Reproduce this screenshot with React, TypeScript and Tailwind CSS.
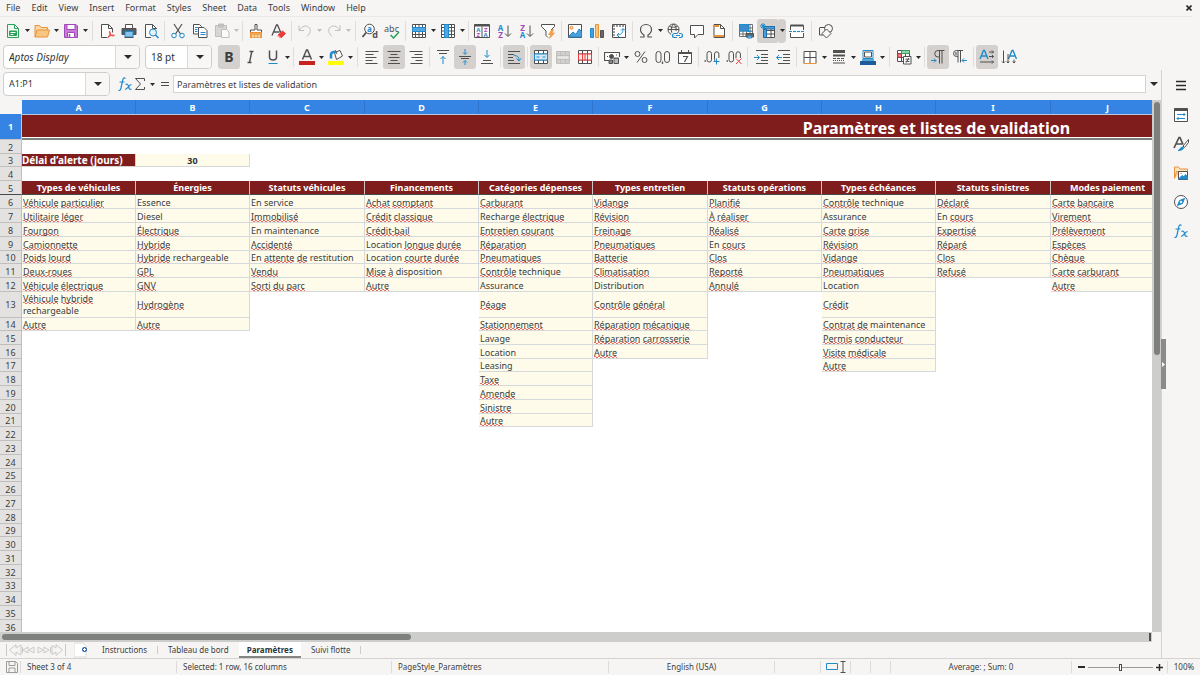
import React from "react";

const D = "#505050";
const B = "#1e8bcd";
const O = "#e8923a";
const R = "#ed3d3b";
const G = "#2aa05a";
const P = "#a347ba";
const L = "#c0bebc";

type Kids = { children?: React.ReactNode };

function Svg({ children, w = 16 }: Kids & { w?: number }) {
  return (
    <svg width={w} height="16" viewBox={`0 0 ${w} 16`} fill="none" stroke={D} strokeWidth="1" aria-hidden="true" className="block shrink-0">
      {children}
    </svg>
  );
}

function T({ x, y, s, c, b, i, children }: Kids & { x: number; y: number; s: number; c: string; b?: boolean; i?: boolean }) {
  return (
    <text x={x} y={y} fontSize={s} fill={c} stroke="none" textAnchor="middle" fontFamily="'Noto Sans', sans-serif" fontWeight={b ? 700 : 400} fontStyle={i ? "italic" : "normal"}>
      {children}
    </text>
  );
}

const icons: Record<string, React.ReactNode> = {
  newDoc: (
    <Svg>
      <path d="M2.5 1.5h7l4 4v9h-11z" fill="#eef8f1" stroke={G} />
      <path d="M9.5 1.5v4h4" stroke={G} />
      <path d="M4.5 8h7v4.500h-7zM4.500 10.200h7M8 8v4.500" fill={G} stroke={G} />
      <path d="M5.500 9.500h5M5.500 11.500h3" stroke="#fff" />
    </Svg>
  ),
  open: (
    <Svg>
      <path d="M1 14V2.500h4.500l1.500 2h6.500v3" fill="#fbd9a5" stroke={O} />
      <path d="M1 14l2-7h12.500l-2 7z" fill="#f9c680" stroke={O} />
    </Svg>
  ),
  save: (
    <Svg>
      <path d="M1.500 1.500h11.500l1.500 1.500v11.500h-13z" fill="#c77bd3" stroke={P} />
      <path d="M4 1.500h8v5H4z" fill="#fff" stroke={P} />
      <path d="M4.500 9.500h7v5h-7z" fill="#fff" stroke={P} />
      <path d="M6.500 11v3.500" stroke={P} strokeWidth="1.500" />
    </Svg>
  ),
  pdf: (
    <Svg>
      <path d="M8 14.500H2.500v-13h7l4 4v4" fill="#fdfdfd" />
      <path d="M9.500 1.500v4h4" />
      <path d="M8.500 15c2-2 3.500-5 2.500-6.500-1-.8-1.200 1.500 1 3.500 1.500 1.300 3.500 1.200 3.300.3-.3-.9-4 .1-6.300 1.700" stroke={R} />
    </Svg>
  ),
  print: (
    <Svg>
      <path d="M4.500 5V1.500h7V5" fill="#fff" />
      <path d="M1 5.500h14v6H1z" fill="#4f5d68" />
      <path d="M4 8.500h8v5.500H4z" fill="#8cc3ea" stroke={B} />
      <path d="M3.500 14.500h9" stroke={D} />
    </Svg>
  ),
  preview: (
    <Svg>
      <path d="M13.500 6V5.500l-4-4h-7v13H8" fill="#fdfdfd" />
      <path d="M9.500 1.500v4h4" />
      <circle cx="10" cy="9.500" r="3.500" fill="#e3f1fb" stroke={B} />
      <path d="M12.500 12l3 3" stroke={B} strokeWidth="1.500" />
    </Svg>
  ),
  cut: (
    <Svg>
      <path d="M4 1l6.500 10M12 1L5.500 11" strokeWidth="1.200" />
      <circle cx="4" cy="12.500" r="2.300" stroke={B} />
      <circle cx="12" cy="12.500" r="2.300" stroke={B} />
    </Svg>
  ),
  copy: (
    <Svg>
      <path d="M1.500 1.500h6l2 2v7.500h-8z" fill="#fff" />
      <path d="M6.500 4.500h5.500l3 3v7h-8.500z" fill="#fff" />
      <path d="M3 4.500h3M3 6.500h2.500M3 8.500h2.500" stroke={B} />
      <path d="M8.500 9.500h5M8.500 11.500h5" stroke={B} />
    </Svg>
  ),
  paste: (
    <Svg>
      <path d="M1.500 2.500h11v11h-11z" fill="#d8d6d4" stroke={L} />
      <path d="M4.500 1h5v3h-5z" fill="#c4c2c0" stroke={L} />
      <path d="M7.500 6.500h5l2.500 2.500v5.500H7.500z" fill="#fafafa" stroke={L} />
    </Svg>
  ),
  clone: (
    <Svg>
      <path d="M7 1.500h2v5.500h4.500v2.500h-11V7H7z" fill="#fff" />
      <path d="M2.500 9.500h11v5h-11z" fill="#f5a54c" stroke={O} />
      <path d="M5 12v2.500M8 12v2.500M11 12v2.500" stroke="#fff" />
    </Svg>
  ),
  clear: (
    <Svg>
      <path d="M2 12.500L6.500 2h1l3.500 8M3.500 9h6" strokeWidth="1.300" />
      <path d="M8 12l4.500-4 3 2.500-4.500 4.500z" fill={R} stroke={R} />
      <path d="M7.500 12.500l3 2.500" stroke="#f7a6a4" strokeWidth="1.500" />
    </Svg>
  ),
  undo: (
    <Svg>
      <path d="M2 2.500v5h5" stroke={L} />
      <path d="M2.500 7C5 3 9 2 11.500 4c3 2.500 2 6-1.500 9.500" stroke={L} />
    </Svg>
  ),
  redo: (
    <Svg>
      <path d="M14 2.500v5H9" stroke={L} />
      <path d="M13.500 7C11 3 7 2 4.500 4c-3 2.500-2 6 1.500 9.500" stroke={L} />
    </Svg>
  ),
  find: (
    <Svg w={18}>
      <circle cx="8.500" cy="6" r="4.800" fill="#fafafa" />
      <path d="M5.200 9.500L1.500 14" strokeWidth="1.800" />
      <T x={8.500} y={8.500} s={8} c={B} b>a</T>
      <T x={14} y={15} s={9} c={D} b>d</T>
    </Svg>
  ),
  spell: (
    <Svg w={20}>
      <T x={9.500} y={8.500} s={9} c={D}>abc</T>
      <path d="M8.500 12l3 3 5.500-6" stroke={G} strokeWidth="1.500" />
    </Svg>
  ),
  row: (
    <Svg>
      <path d="M1.500 1.500h13v13h-13z" fill="#fff" />
      <path d="M4.500 1.500v13M8 1.500v13M11.500 1.500v13M1.500 11.500h13" />
      <path d="M1.500 4.500h13v4h-13z" fill="#53a7e0" stroke={B} />
    </Svg>
  ),
  col: (
    <Svg>
      <path d="M1.500 1.500h13v13h-13z" fill="#fff" />
      <path d="M1.500 4.500h13M1.500 8h13M1.500 11.500h13M11.500 1.500v13" />
      <path d="M4.500 1.500h4v13h-4z" fill="#53a7e0" stroke={B} />
    </Svg>
  ),
  sort: (
    <Svg>
      <path d="M.5 1.500h15v13H.5zM8 3.500v11" fill="#fff" />
      <path d="M.5 2.500h15" strokeWidth="2" />
      <T x={4.300} y={9} s={6} c={B} b>A</T>
      <T x={4.300} y={14} s={6} c={P} b>Z</T>
      <T x={11.700} y={9} s={6} c={P} b>Z</T>
      <T x={11.700} y={14} s={6} c={B} b>A</T>
    </Svg>
  ),
  sortAZ: (
    <Svg>
      <T x={4.500} y={7.500} s={8} c={B} b>A</T>
      <T x={4.500} y={15} s={8} c={P} b>Z</T>
      <path d="M12 2.500V13M9 10.500l3 3 3-3" />
    </Svg>
  ),
  sortZA: (
    <Svg>
      <T x={4.500} y={7.500} s={8} c={P} b>Z</T>
      <T x={4.500} y={15} s={8} c={B} b>A</T>
      <path d="M12 2.500V13M9 10.500l3 3 3-3" />
    </Svg>
  ),
  filter: (
    <Svg>
      <path d="M8 14.500l-2-2V8L1.500 3.500v-2h13v2L11 7" fill="#fff" />
      <path d="M12 6.500L8.500 11.500H11L9.500 15.500 14.500 10H12l1.500-3.500z" fill="#f5a54c" stroke={O} strokeWidth=".7" />
    </Svg>
  ),
  image: (
    <Svg>
      <path d="M1.500 1.500h13v13h-13z" fill="#fff" />
      <path d="M2 13l4-4 3 2.500L12 6l2.500 2.500v5.500H2z" fill="#4b9fda" stroke={B} />
      <circle cx="4.500" cy="4.800" r="1.500" fill="#fcd49a" stroke={O} />
    </Svg>
  ),
  chart: (
    <Svg>
      <path d="M1.500 5.500h3v9h-3z" fill="#4b9fda" stroke={B} />
      <path d="M6.500 1.500h3v13h-3z" fill="#f9c680" stroke={O} />
      <path d="M11.500 7.500h3v7h-3z" fill="#6a6a6a" />
    </Svg>
  ),
  pivot: (
    <Svg>
      <path d="M1.500 1.500h13v13h-13z" fill="#fff" />
      <path d="M2 3h12M3 5v9" stroke="#9b9b9b" strokeWidth="2" strokeDasharray="2 1" />
      <path d="M6 12c4 0 6-2 6-6M10 7.500L12 5.500l2 2M8 10l-2 2 2 2" stroke={B} />
    </Svg>
  ),
  omega: (
    <Svg>
      <path d="M2 14h4v-2C3.500 10.500 2.500 8.500 2.500 6.500 2.500 3.500 5 1.500 8 1.500s5.500 2 5.500 5c0 2-1 4-3.500 5.500v2h4" strokeWidth="1.200" />
    </Svg>
  ),
  link: (
    <Svg>
      <circle cx="6.500" cy="6.500" r="5.500" />
      <path d="M1 6.500h11M6.500 1c-3 3-3 8 0 11M6.500 1c2.500 2 3 5 2.500 7M2.500 3.500c2.500 1 5.500 1 8 0" />
      <path d="M10 10.500H7.500a2 2 0 000 4H10M12 10.500h1.500a2 2 0 010 4H12M9 12.500h4" stroke="#f6f5f4" strokeWidth="3" />
      <path d="M10 10.500H7.500a2 2 0 000 4H10M12 10.500h1.500a2 2 0 010 4H12M9 12.500h4" stroke={B} strokeWidth="1.200" />
    </Svg>
  ),
  comment: (
    <Svg>
      <path d="M1.500 2.500h13v9H9l-3.500 3.500v-3.500h-4z" fill="#fff" />
    </Svg>
  ),
  header: (
    <Svg>
      <path d="M3 1.500h6.500l4 4v9H3z" fill="#fff" />
      <path d="M9.500 1.500v4h4" />
      <path d="M3 3h5M3 13h10" stroke={O} strokeWidth="2" />
    </Svg>
  ),
  printArea: (
    <Svg>
      <path d="M1.500 1.500h13v12h-13zM1.500 5h13M1.500 8h13M1.500 11h13M5 1.500v12M8.500 1.500v12M12 1.500v12" fill="#fff" strokeWidth=".8" />
      <path d="M1.500 1.500h9V8h-9z" fill="#3a8dcb" stroke={B} />
      <path d="M8 10.500h7.500v3.500H8z" fill="#5b6a75" />
      <path d="M9.500 8.500h4M9.500 13h4v2h-4z" fill="#8cc3ea" stroke={B} />
    </Svg>
  ),
  freeze: (
    <Svg>
      <path d="M3.500 3.500h11v11h-11zM3.500 7.500h11M3.500 11h11M11 3.500v11" fill="#fff" />
      <path d="M3.500 3.500h11V6h-11zM3.500 6H6.500v8.500H3.500z" fill="#4b9fda" stroke="#1f6ca8" />
      <path d="M3 0v6M0 3h6M1 1l4 4M5 1L1 5" stroke={B} />
    </Svg>
  ),
  split: (
    <Svg>
      <path d="M1.500 7V2.500h13V7M1.500 10v4.500h13V10" fill="#fff" />
      <path d="M1.500 2.500h13" strokeWidth="2" />
      <path d="M0 8.500h16" stroke={B} strokeDasharray="3 1" />
    </Svg>
  ),
  shapes: (
    <Svg>
      <circle cx="10.500" cy="5.500" r="4" />
      <path d="M2 4.500h5M1.500 4.500v7.500h4" />
      <path d="M8.500 6l4.500 4.500L8.500 15 4 10.500z" fill="#fafafa" />
    </Svg>
  ),
  left: (
    <Svg>
      <path d="M1.500 2.500h13M1.500 5.500h8M1.500 8.500h11M1.500 11.500h7M1.500 14.500h12" />
    </Svg>
  ),
  center: (
    <Svg>
      <path d="M1.500 2.500h13M4.500 5.500h7M2.500 8.500h11M4.500 11.500h7M2 14.500h12" />
    </Svg>
  ),
  right: (
    <Svg>
      <path d="M1.500 2.500h13M6.500 5.500h8M3.500 8.500h11M7.500 11.500h7M2.500 14.500h12" />
    </Svg>
  ),
  vTop: (
    <Svg>
      <path d="M2 1.500h12M4 4.500h8" />
      <path d="M8 15V7.500M5.500 10L8 7.500l2.500 2.500" stroke={B} />
    </Svg>
  ),
  vMid: (
    <Svg>
      <path d="M2 7.500h12M4 9.500h8" />
      <path d="M8 0v5M6 3.500l2 2 2-2M8 16v-4M6 13.500l2-2 2 2" stroke={B} />
    </Svg>
  ),
  vBot: (
    <Svg>
      <path d="M2 14.500h12M4 11.500h8" />
      <path d="M8 1v7M5.500 6L8 8.500 10.500 6" stroke={B} />
    </Svg>
  ),
  wrap: (
    <Svg>
      <path d="M2 2.500h12M2 5.500h6M2 8.500h5M2 11.500h6M2 14.500h12" />
      <path d="M8 6.500c3.500 0 5 1.500 5 5M10.500 9.500l2.500 2.500 2-2.500" stroke={B} />
    </Svg>
  ),
  merge: (
    <Svg>
      <path d="M1.500 1.500h13v13h-13zM1.500 5h13M1.500 11h13M5.500 1.500V5M10.500 1.500V5M5.500 11v3.500M10.500 11v3.500" fill="#fff" />
      <path d="M1.500 5h13v6h-13z" fill="#d3e9f8" stroke={B} />
      <path d="M3.500 8h3M12.500 8h-3" stroke={B} />
    </Svg>
  ),
  mergeOff: (
    <Svg>
      <path d="M1.500 2.500h13v12h-13zM1.500 6.500h13M1.500 10.500h13M5.500 2.500v12M10.500 2.500v12" fill="#d2d0ce" stroke={L} />
      <path d="M2.500 8.500h11" stroke="#e9e8e7" strokeWidth="2.500" />
    </Svg>
  ),
  unmerge: (
    <Svg>
      <path d="M1.500 1.500h13v13h-13zM1.500 5h13M1.500 11h13M5.500 1.500V5M10.500 1.500V5M5.500 11v3.500M10.500 11v3.500" fill="#fff" />
      <path d="M1.500 5h13v6h-13zM5.500 5v6M10.500 5v6M8 5v6" fill="#fdeaea" stroke={R} />
    </Svg>
  ),
  currency: (
    <Svg>
      <path d="M7 11.500H.5v-8h15V8" fill="#fff" strokeWidth="1.200" />
      <circle cx="7.500" cy="7.500" r="2" fill={D} />
      <path d="M3 7.500h1M12 6h1" />
      <path d="M5 11h3.500v3.500H5zM10 9h4.500v5.500H10z" fill="#8a8a8a" />
      <path d="M10.500 11h3.500M10.500 13h3.500" stroke="#e8e8e8" />
    </Svg>
  ),
  percent: (
    <Svg>
      <circle cx="4.500" cy="5" r="2.500" />
      <circle cx="11.500" cy="11" r="2.500" />
      <path d="M12 2.500l-8 11" />
    </Svg>
  ),
  number: (
    <Svg>
      <rect x="1" y="2.500" width="5" height="11" rx="2.500" />
      <rect x="9.500" y="2.500" width="5" height="11" rx="2.500" />
      <path d="M7.500 12.500v2.500" strokeWidth="1.300" />
    </Svg>
  ),
  date: (
    <Svg>
      <path d="M1.500 3.500h13v11h-13z" fill="#fff" />
      <path d="M1.500 4h13" strokeWidth="2" />
      <path d="M4.500 1v3M11.500 1v3" />
      <path d="M6 7.500h4.500L7.500 13" strokeWidth="1.200" />
    </Svg>
  ),
  addDec: (
    <Svg>
      <path d="M.5 12h1.500" strokeWidth="1.600" />
      <rect x="3" y="2.500" width="4.500" height="10.500" rx="2.200" />
      <path d="M10.500 9.500V5a2.200 2.200 0 014.400 0v4M10.500 9c0 2 .3 3 .8 3.500" />
      <path d="M12.500 9.500v6M9.500 12.500h6" stroke={B} />
    </Svg>
  ),
  delDec: (
    <Svg>
      <path d="M.5 12h1.500" strokeWidth="1.600" />
      <rect x="3" y="2.500" width="4.500" height="10.500" rx="2.200" />
      <path d="M10 9V5a2.200 2.200 0 014.400 0v4" />
      <path d="M10 9.500l5.500 5.500M15.500 9.500L10 15" stroke={R} />
    </Svg>
  ),
  indent: (
    <Svg>
      <path d="M3 1.500h12M8 5.500h7M8 8.500h7M8 11.500h7M3 14.500h12" />
      <path d="M1 8.500h5.500M4 6l2.500 2.500L4 11" stroke={B} />
    </Svg>
  ),
  outdent: (
    <Svg>
      <path d="M3 1.500h12M8 5.500h7M8 8.500h7M8 11.500h7M3 14.500h12" />
      <path d="M7 8.500H1.500M4 6L1.500 8.500 4 11" stroke={B} />
    </Svg>
  ),
  borders: (
    <Svg>
      <path d="M2 14V2.500h12V14M8 2.500V14M2 8.500h12" fill="#fff" />
      <path d="M1.500 14.500h13" stroke={O} />
    </Svg>
  ),
  lineStyle: (
    <Svg>
      <path d="M2 2.500h12" strokeWidth="3" />
      <path d="M2 6.500h12" strokeWidth="2" />
      <path d="M2 9.500h12" strokeDasharray="3 1" />
      <path d="M2 11.500h12" strokeDasharray="1 1" />
      <path d="M2 14h12" />
    </Svg>
  ),
  lineColor: (
    <Svg>
      <path d="M3 1.500h10v8H3z" fill="#fff" stroke={B} />
      <path d="M4.500 3h7v5h-7z" />
      <path d="M0 14h16" stroke="#1c5c9a" strokeWidth="4" />
      <path d="M2 11h12" stroke={B} strokeWidth="1.500" />
    </Svg>
  ),
  cond: (
    <Svg>
      <path d="M1.500 1.500h12v11h-12zM1.500 4.500h12M1.500 8.500h12M5.500 1.500v11M9.500 1.500v11" fill="#fff" />
      <path d="M5.500 1.500h8v3h-8z" fill="#8fd3a8" stroke={G} strokeWidth=".8" />
      <path d="M2 5h3v3H2z" fill="#f59a98" stroke={R} strokeWidth=".8" />
      <path d="M7.500 7.500h7.500v7.500H7.500z" fill="#fff" />
      <path d="M9.500 10.200h4M9.500 12.400h4M12.800 9l-2.600 4.600" />
    </Svg>
  ),
  ltr: (
    <Svg>
      <path d="M9.500 1.500v13M12 1.500v13M14.500 1.500H8a3.200 3.200 0 000 6.500h1.500" />
      <path d="M1 11.500h5M4 9.500l2 2-2 2" stroke={B} />
    </Svg>
  ),
  rtl: (
    <Svg>
      <path d="M6 1.500v12M8.500 1.500v12M11 1.500H4.500a3 3 0 000 6H6" />
      <path d="M4 3v3.500" stroke="#9a9a9a" strokeWidth="2.500" />
      <path d="M15 11.500h-5M12 9.500l-2 2 2 2" stroke={B} />
    </Svg>
  ),
  textH: (
    <Svg>
      <path d="M1 10L4.500 1.500h1L9 10M2.500 7h5" stroke={B} strokeWidth="1.400" />
      <path d="M10 3h4.500M10 7.500h4.500M1 13h13.500M13 1.500L14.500 3 13 4.500M13 6l1.500 1.500L13 9M13 11.500l1.500 1.500-1.500 1.500" />
    </Svg>
  ),
  textV: (
    <Svg>
      <path d="M7.500 10L11 1.500h1L15.500 10M9 7h5" stroke={B} strokeWidth="1.400" />
      <path d="M2.500 1.500V14M7 5v9M13 10.500V14M1 12.500L2.500 14 4 12.500M5.500 12.500L7 14l1.500-1.500M11.500 12.500L13 14l1.500-1.500" />
    </Svg>
  ),
  fontColor: (
    <Svg>
      <path d="M3.500 10.500L7.500 1h1l4 9.500M5 7.500h6" strokeWidth="1.500" />
      <path d="M0 14h16" stroke="#c9211e" strokeWidth="4" />
    </Svg>
  ),
  highlight: (
    <Svg>
      <path d="M6.500 3.500L12 1.500l2.500 5.500-6 3.500z" fill="#fff" />
      <path d="M9 5L7 1" />
      <path d="M3 9.500V5.500c0-2 2-3 4.500-2" stroke={B} strokeWidth="2.500" />
      <path d="M0 14h16" stroke="#ffff00" strokeWidth="4" />
    </Svg>
  ),
  bold: <span className="text-[14px] leading-4 font-bold text-[#3c3c3c]">B</span>,
  italic: (
    <Svg>
      <path d="M6.500 2.500h4M4.500 13.500h4M8.800 2.500l-2.300 11" strokeWidth="1.400" />
    </Svg>
  ),
  underline: (
    <Svg>
      <path d="M4.500 1.500V8c0 4 7 4 7 0V1.500" strokeWidth="1.500" />
      <path d="M3.500 14.500h9" stroke={B} />
    </Svg>
  ),
};

type Item = { t: "b" | "a" | "s" | "w"; n?: string; label?: string; on?: boolean; dim?: boolean };
const b = (n: string, label: string, on = false): Item => ({ t: "b", n, label, on });
const a = (label: string, dim = false, on = false): Item => ({ t: "a", label, dim, on });
const s: Item = { t: "s" };
const w: Item = { t: "w" };

const standardBar: Item[] = [
  b("newDoc", "New"), a("New options"), b("open", "Open"), a("Open options"), b("save", "Save"), a("Save options"), w,
  b("pdf", "Export as PDF"), b("print", "Print"), b("preview", "Print preview"), s,
  b("cut", "Cut"), b("copy", "Copy"), b("paste", "Paste"), a("Paste options", true), s,
  b("clone", "Clone formatting"), b("clear", "Clear formatting"), s,
  b("undo", "Undo"), a("Undo list", true), b("redo", "Redo"), a("Redo list", true), w,
  b("find", "Find and replace"), b("spell", "Spelling"), s,
  b("row", "Row"), a("Row options"), b("col", "Column"), a("Column options"), s,
  b("sort", "Sort"), b("sortAZ", "Sort ascending"), b("sortZA", "Sort descending"), b("filter", "AutoFilter"), s,
  b("image", "Image"), b("chart", "Chart"), b("pivot", "Pivot table"), s,
  b("omega", "Special character"), a("Special characters"), b("link", "Hyperlink"), b("comment", "Comment"), b("header", "Headers and footers"), s,
  b("printArea", "Print area"), b("freeze", "Freeze rows and columns", true), a("Freeze options", false, true), b("split", "Split window"), w,
  b("shapes", "Draw functions"),
];

const formatBar: Item[] = [
  b("bold", "Bold", true), b("italic", "Italic"), b("underline", "Underline"), a("Underline options"), s,
  b("fontColor", "Font color"), a("Font color options"), b("highlight", "Background color"), a("Background color options"), w,
  b("left", "Align left"), b("center", "Align center", true), b("right", "Align right"), s,
  b("vTop", "Align top"), b("vMid", "Center vertically", true), b("vBot", "Align bottom"), s,
  b("wrap", "Wrap text", true), s,
  b("merge", "Merge and center", true), b("mergeOff", "Merge cells"), b("unmerge", "Unmerge cells"), s,
  b("currency", "Currency"), a("Currency options"), b("percent", "Percent"), b("number", "Number"), b("date", "Date"), s,
  b("addDec", "Add decimal place"), b("delDec", "Delete decimal place"), s,
  b("indent", "Increase indent"), b("outdent", "Decrease indent"), s,
  b("borders", "Borders"), a("Border options"), b("lineStyle", "Border style"), a("Border style options"), b("lineColor", "Border color"), a("Border color options"), w,
  b("cond", "Conditional formatting"), a("Conditional options"), s,
  b("ltr", "Left-to-right", true), b("rtl", "Right-to-left"), s,
  b("textH", "Text left to right", true), b("textV", "Text top to bottom"),
];

function Caret({ dim = false, big = false }: { dim?: boolean; big?: boolean }) {
  return (
    <svg width={big ? 8 : 5} height={big ? 4 : 3} viewBox="0 0 10 6" preserveAspectRatio="none" aria-hidden="true" className="block shrink-0">
      <path d="M0 0h10L5 6z" fill={dim ? L : "#2a2a2a"} />
    </svg>
  );
}

function Bar({ items }: { items: Item[] }) {
  return (
    <>
      {items.map((it, i) => {
        if (it.t === "s" || it.t === "w")
          return (
            <span key={i} className={it.t === "s" ? "flex w-[5px] shrink-0 justify-center" : "flex w-[7px] shrink-0 justify-center"}>
              <span className="h-5 w-px bg-[#e0dedc]" />
            </span>
          );
        if (it.t === "a")
          return (
            <button key={i} aria-label={it.label} className={it.on ? "flex h-6 w-[7px] shrink-0 items-center justify-center rounded-r bg-[#d3d0cd]" : "flex h-6 w-[7px] shrink-0 items-center justify-center"}>
              <Caret dim={it.dim} />
            </button>
          );
        return (
          <button key={i} aria-label={it.label} className={it.on ? "flex h-6 w-[22px] shrink-0 items-center justify-center rounded-[3px] bg-[#d3d0cd]" : "flex h-6 w-[22px] shrink-0 items-center justify-center"}>
            {icons[it.n as string]}
          </button>
        );
      })}
    </>
  );
}

function Combo({ label, value, width, italic = false, small = false }: { label: string; value: string; width: string; italic?: boolean; small?: boolean }) {
  return (
    <div className={`flex h-6 shrink-0 overflow-hidden rounded border border-[#d0cdca] bg-white ${width}`}>
      <input aria-label={label} defaultValue={value} className={`min-w-0 flex-1 bg-transparent pl-[5px] text-[#2e3436] outline-none ${small ? "text-[9px]" : "text-[10px]"} ${italic ? "italic" : ""}`} />
      <button aria-label={`${label} list`} className="flex w-6 shrink-0 items-center justify-center border-l border-[#dcdad7] bg-[#f8f7f6]">
        <Caret big />
      </button>
    </div>
  );
}

const heads = ["Types de véhicules", "Énergies", "Statuts véhicules", "Financements", "Catégories dépenses", "Types entretien", "Statuts opérations", "Types échéances", "Statuts sinistres", "Modes paiement"];

// An asterisk marks a word the spell checker underlines.
const lists: string[][] = [
  ["*Véhicule *particulier", "*Utilitaire *léger", "*Fourgon", "*Camionnette", "*Poids *lourd", "*Deux-roues", "*Véhicule *électrique", "*Véhicule *hybride rechargeable", "*Autre"],
  ["Essence", "Diesel", "*Électrique", "*Hybride", "*Hybride rechargeable", "*GPL", "*GNV", "*Hydrogène", "*Autre"],
  ["En service", "*Immobilisé", "En maintenance", "*Accidenté", "En *attente *de restitution", "*Vendu", "*Sorti *du *parc"],
  ["*Achat *comptant", "*Crédit *classique", "*Crédit-bail", "Location *longue *durée", "Location *courte *durée", "*Mise *à disposition", "*Autre"],
  ["*Carburant", "Recharge *électrique", "*Entretien *courant", "*Réparation", "*Pneumatiques", "*Contrôle technique", "Assurance", "*Péage", "*Stationnement", "Lavage", "Location", "Leasing", "*Taxe", "*Amende", "*Sinistre", "*Autre"],
  ["*Vidange", "*Révision", "*Freinage", "*Pneumatiques", "*Batterie", "*Climatisation", "Distribution", "*Contrôle *général", "*Réparation *mécanique", "*Réparation *carrosserie", "*Autre"],
  ["*Planifié", "*À *réaliser", "*Réalisé", "En *cours", "*Clos", "*Reporté", "*Annulé"],
  ["*Contrôle technique", "Assurance", "*Carte *grise", "*Révision", "*Vidange", "*Pneumatiques", "Location", "*Crédit", "*Contrat *de maintenance", "*Permis *conducteur", "*Visite *médicale", "*Autre"],
  ["*Déclaré", "En *cours", "*Expertisé", "*Réparé", "*Clos", "*Refusé"],
  ["*Carte *bancaire", "*Virement", "*Prélèvement", "*Espèces", "*Chèque", "*Carte *carburant", "*Autre"],
];

const letters = "ABCDEFGHIJKLMNOP".split("");

function rowHeight(n: number) {
  if (n === 1) return "h-[26px]";
  if (n === 13) return "h-[26px] leading-3";
  if (n === 3 || n === 10 || n === 14) return "h-[13px]";
  if (n > 14 && n % 4 === 1) return "h-[13px]";
  return "h-[14px]";
}

function Words({ text }: { text: string }) {
  return (
    <>
      {text.split(" ").map((word, i) => (
        <React.Fragment key={i}>
          {i > 0 && " "}
          {word.startsWith("*") ? (
            <span className="bg-[linear-gradient(90deg,#ea6a66_50%,transparent_50%),linear-gradient(90deg,transparent_50%,#ea6a66_50%)] bg-[length:4px_1px] bg-[position:0_10px,0_11px] bg-repeat-x">{word.slice(1)}</span>
          ) : (
            word
          )}
        </React.Fragment>
      ))}
    </>
  );
}

function RowCells({ n }: { n: number }) {
  if (n === 1)
    return (
      <td colSpan={16} className="border-t border-b-2 border-t-[#b9c9dc] border-b-[#7b807b] p-0">
        <div className="h-[23px] border-b border-white bg-[#7f1d1d] text-center text-[16px] leading-[26px] font-bold text-white">Paramètres et listes de validation</div>
      </td>
    );
  if (n === 3)
    return (
      <>
        <td className="border-r border-b border-[#d5d3d0] bg-[#7f1d1d] p-0 text-[10px] font-bold text-white">Délai d’alerte (jours)</td>
        <td className="border border-t-0 border-l-0 border-[#d6d9dc] bg-[#fffbeb] p-0 pt-px text-center font-bold text-[#2e3436]">30</td>
        <td colSpan={14} className="p-0" />
      </>
    );
  if (n === 5)
    return (
      <>
        {letters.map((l, i) => (
          <td key={l} className="border-r border-b border-r-[#cfc4c2] border-b-[#454a4c] bg-[#7f1d1d] p-0 text-center font-bold text-white">
            {heads[i]}
          </td>
        ))}
      </>
    );
  if (n < 6) return <td colSpan={16} className="p-0" />;
  return (
    <>
      {letters.map((l, i) => {
        const text = lists[i]?.[n - 6];
        return text ? (
          <td key={l} className="overflow-hidden border-r border-b border-[#d6d9dc] bg-[#fffbeb] p-0 pt-px pl-px text-[#383d40]">
            <Words text={text} />
          </td>
        ) : (
          <td key={l} className="p-0" />
        );
      })}
    </>
  );
}

function rowHead(n: number) {
  if (n === 1) return "border-r border-b border-[#c9c8c6] bg-[#3584e4] p-0 font-bold text-white";
  if (n === 5) return "border-r border-b border-r-[#c0bfbd] border-b-[#454a4c] bg-[#e3e2e1] p-0 pt-px font-normal text-[#3d3d3d]";
  return "border-r border-b border-[#c0bfbd] bg-[#e3e2e1] p-0 pt-px font-normal text-[#3d3d3d]";
}

function Sheet() {
  const rows = Array.from({ length: 36 }, (_, i) => i + 1);
  return (
    <table className="w-[1851px] table-fixed border-separate border-spacing-0 text-[9px] leading-[11px]">
      <colgroup>
        <col className="w-[22px]" />
        {letters.map((l, i) => (
          <col key={l} className={i % 3 === 2 ? "w-[115px]" : "w-[114px]"} />
        ))}
      </colgroup>
      <thead>
        <tr className="h-[14px]">
          <th className="bg-[#f6f5f4] p-0" />
          {letters.map((l) => (
            <th key={l} scope="col" className="border-r border-[#2f74cc] bg-[#3584e4] p-0 font-bold text-white">
              {l}
            </th>
          ))}
        </tr>
      </thead>
      <tbody>
        {rows.map((n) => (
          <tr key={n} className={rowHeight(n)}>
            <th scope="row" className={rowHead(n)}>
              {n}
            </th>
            <RowCells n={n} />
          </tr>
        ))}
      </tbody>
    </table>
  );
}

function Side({ label, children }: Kids & { label: string }) {
  return (
    <button aria-label={label} className="flex h-[29px] w-full items-center justify-center">
      {children}
    </button>
  );
}

function Fx() {
  return (
    <Svg>
      <path d="M8.500 2.500C6.500 1 6 3 5.500 5L4 12c-.4 2-1.200 3-2.500 2.200M2.500 6h5" stroke={B} strokeWidth="1.200" />
      <path d="M8.500 8.500c2-1 2.500 0 3 2s1 3.500 3 2.500M14.500 8.500c-2 0-4 4.500-6.500 5" stroke={B} strokeWidth="1.200" />
    </Svg>
  );
}

function SideBar() {
  return (
    <aside className="flex w-[39px] shrink-0 flex-col border-l border-[#d5d3d1] pt-px">
      <div className="relative flex-1">
        <Side label="Sidebar settings">
          <Svg>
            <path d="M3 3.500h10M3 7.500h10M3 11.500h10" stroke="#2a2a2a" strokeWidth="1.500" />
          </Svg>
        </Side>
        <Side label="Properties">
          <Svg>
            <path d="M1.500 1.500h13v13h-13z" fill="#fff" />
            <path d="M1.500 2.500h13" strokeWidth="3" />
            <path d="M4 7.500h8M10.500 6l1.500 1.500L10.500 9M12 11.500H4M5.500 10L4 11.500 5.500 13" stroke={B} />
          </Svg>
        </Side>
        <Side label="Styles">
          <Svg>
            <path d="M1 12L6 1.500h1l3 7M3 8h6.500" strokeWidth="1.700" />
            <path d="M15.500 3.500L10 10l1.500 1.500 4-5z" fill="#fff" />
            <path d="M5 14.500c2 0 2-3.500 4.500-3.500 2 0 1.500 3.500-4.500 3.500z" fill={B} stroke={B} />
          </Svg>
        </Side>
        <Side label="Gallery">
          <Svg>
            <path d="M1.500 13.500V2h4l1.500 2h7.500v3" fill="#fde3c0" stroke={O} />
            <path d="M1.500 13.500l2-7H7" fill="#f9c680" stroke={O} />
            <path d="M5.500 6.500h9v8h-9z" fill="#fff" />
            <path d="M6 13.500l3-3 2 1.500 1.500-2.500 2 2.500v2H6z" fill={B} stroke={B} />
            <path d="M7.500 8.500h1.500" stroke={O} />
          </Svg>
        </Side>
        <Side label="Navigator">
          <Svg>
            <circle cx="8" cy="8" r="6.500" fill="#fff" />
            <path d="M11.500 4.500l-2 5-5 2 2-5z" fill={B} stroke={B} />
            <circle cx="8" cy="8" r=".8" fill="#fff" stroke="#fff" />
          </Svg>
        </Side>
        <Side label="Functions">
          <Fx />
        </Side>
        <button aria-label="Hide sidebar" className="absolute top-[268px] -left-px flex h-[50px] w-[5px] items-center justify-center bg-[#8b8c8a]">
          <svg width="3" height="5" viewBox="0 0 3 5" aria-hidden="true">
            <path d="M0 0l3 2.500L0 5z" fill="#fff" />
          </svg>
        </button>
      </div>
    </aside>
  );
}

function Tabs() {
  const tab = "flex items-center justify-center px-[10px]";
  return (
    <nav className="flex h-4 shrink-0 items-stretch text-[8px] leading-3 text-[#3d3d3d]">
      <div className="flex w-[74px] items-center pl-[5px]">
        <svg width="62" height="14" viewBox="0 0 62 14" fill="none" stroke="#cbc9c7" aria-hidden="true">
          <path d="M1.500 1v12M11 1.500L4.500 7l6.500 5.500V9l5 3V2l-5 3zM17.500 4v6M23 4l-5 3 5 3zM29 4l-5 3 5 3zM33 4l5 3-5 3zM39 4l5 3-5 3zM45.500 4v6M51 1.500L57.500 7 51 12.500V9l-4 2.500v-9L51 5zM60.500 1v12" />
        </svg>
      </div>
      <button aria-label="Add sheet" className="flex w-4 items-center">
        <svg width="14" height="16" viewBox="0 0 14 16" fill="none" aria-hidden="true">
          <path d="M0 1h9l3 3v11H0z" fill="#fff" stroke="#dcdad8" />
          <circle cx="10.500" cy="7.500" r="2.500" fill="#2f64a8" />
          <path d="M10.500 6v3M9 7.500h3" stroke="#fff" />
        </svg>
      </button>
      <button className={`${tab} ml-0.5`}>Instructions</button>
      <span className="my-1 w-px bg-[#cfcdcb]" />
      <button className={tab}>Tableau de bord</button>
      <button className="flex items-center justify-center border-b-2 border-[#868685] bg-white px-2 pt-px font-bold text-[#2e3436]">Paramètres</button>
      <button className={tab}>Suivi flotte</button>
      <span className="my-1 w-px bg-[#cfcdcb]" />
    </nav>
  );
}

function Status() {
  const cell = "flex items-center border-l border-[#dddbd9]";
  return (
    <footer className="flex h-[17px] shrink-0 items-center border-t border-[#d5d3d1] text-[8px] leading-3 text-[#3d3d3d]">
      <div className="flex h-3 w-5 items-center pl-1.5">
        <svg width="12" height="12" viewBox="0 0 12 12" fill="none" stroke="#9b9b9b" aria-hidden="true">
          <path d="M.5.500h9l2 2v9H.5zM3 .5v4h6v-4M3 11.500V7h6v4.500" />
        </svg>
      </div>
      <div className={`${cell} h-3 w-[156px] pl-1.5`}>Sheet 3 of 4</div>
      <div className={`${cell} h-3 w-[215px] pl-1.5`}>Selected: 1 row, 16 columns</div>
      <div className={`${cell} h-3 min-w-0 flex-1 pl-1.5`}>PageStyle_Paramètres</div>
      <div className={`${cell} h-3 w-[166px] justify-center`}>English (USA)</div>
      <div className={`${cell} h-3 w-[46px]`} />
      <div className={`${cell} h-3 w-[30px] justify-center gap-0.5`}>
        <svg width="12" height="8" viewBox="0 0 12 8" fill="none" stroke={B} aria-hidden="true">
          <path d="M.5.500h11v6H.5z" />
        </svg>
        <svg width="6" height="12" viewBox="0 0 6 12" fill="none" stroke={D} aria-hidden="true">
          <path d="M.5.500h5M3 .5v11M.5 11.500h5" />
        </svg>
      </div>
      <div className={`${cell} h-3 w-5`} />
      <div className={`${cell} h-3 w-5`} />
      <div className={`${cell} h-3 w-[181px] justify-center`}>Average: ; Sum: 0</div>
      <div className={`${cell} h-3 w-[96px] justify-between pr-1 pl-1.5`}>
        <button aria-label="Zoom out" className="h-0.5 w-[7px] bg-[#2a2a2a]" />
        <input
          type="range"
          aria-label="Zoom"
          defaultValue="50"
          className="h-[7px] w-[65px] appearance-none bg-[linear-gradient(#9a9a9a,#9a9a9a)] bg-[length:100%_1px] bg-center bg-no-repeat [&::-webkit-slider-thumb]:h-[7px] [&::-webkit-slider-thumb]:w-[3px] [&::-webkit-slider-thumb]:appearance-none [&::-webkit-slider-thumb]:border [&::-webkit-slider-thumb]:border-[#4a4a4a] [&::-webkit-slider-thumb]:bg-white"
        />
        <button aria-label="Zoom in">
          <svg width="7" height="7" viewBox="0 0 7 7" stroke="#2a2a2a" strokeWidth="1.500" aria-hidden="true" className="block">
            <path d="M0 3.500h7M3.500 0v7" />
          </svg>
        </button>
      </div>
      <div className={`${cell} h-3 w-[33px] justify-center`}>100%</div>
    </footer>
  );
}

export default function App() {
  const menus = ["File", "Edit", "View", "Insert", "Format", "Styles", "Sheet", "Data", "Tools", "Window", "Help"];
  return (
    <div className="flex h-screen flex-col overflow-hidden bg-[#f6f5f4] font-['Noto_Sans',sans-serif] text-[#2e3436]">
      <header className="mr-2 flex h-[17px] shrink-0 items-center border-b border-[#ebe9e8] pl-1.5">
        {menus.map((m) => (
          <button key={m} className="mr-[11px] text-[9px] leading-3 text-[#3d3d3d]">
            {m}
          </button>
        ))}
        <button aria-label="Close document" className="ml-auto">
          <svg width="6" height="6" viewBox="0 0 6 6" stroke="#2a2a2a" strokeWidth="1.600" aria-hidden="true">
            <path d="M.5.500l5 5M5.500.500l-5 5" />
          </svg>
        </button>
      </header>
      <div className="flex h-[27px] shrink-0 items-center pl-0.5">
        <Bar items={standardBar} />
      </div>
      <div className="flex h-[26px] shrink-0 items-center pl-[3px]">
        <Combo label="Font name" value="Aptos Display" width="mr-[5px] w-[137px]" italic />
        <Combo label="Font size" value="18 pt" width="mr-1.5 w-[67px]" />
        <Bar items={formatBar} />
      </div>
      <div className="flex min-h-0 flex-1">
        <main className="flex min-w-0 flex-1 flex-col">
          <div className="flex h-[30px] shrink-0 items-center pb-0.5 pl-[3px]">
            <Combo label="Name box" value="A1:P1" width="mr-[7px] w-[107px]" small />
            <button aria-label="Function wizard" className="flex w-4 justify-center">
              <Fx />
            </button>
            <button aria-label="Select function" className="flex w-3.5 justify-center">
              <Svg w={14}>
                <path d="M11.500 5V2.500h-9L7.500 8l-5 5.500h9V11" />
              </Svg>
            </button>
            <button aria-label="Function list" className="flex w-2.5 justify-center">
              <Caret />
            </button>
            <button aria-label="Formula" className="flex w-4 flex-col items-center gap-0.5">
              <span className="h-px w-2 bg-[#4a4a4a]" />
              <span className="h-px w-2 bg-[#4a4a4a]" />
            </button>
            <input aria-label="Formula input" defaultValue="Paramètres et listes de validation" className="h-[18px] min-w-0 flex-1 border border-[#d5d3d1] bg-white pl-[3px] text-[9px] text-[#3d3d3d] outline-none" />
            <button aria-label="Expand formula bar" className="flex w-[15px] justify-center">
              <Caret big />
            </button>
          </div>
          <div className="flex min-h-0 flex-1">
            <div className="min-w-0 flex-1 overflow-hidden bg-white">
              <Sheet />
            </div>
            <div className="flex w-[9px] shrink-0 justify-center bg-[#cdcdcc] pt-0.5">
              <div className="h-[253px] w-1.5 rounded-full bg-[#7e807e]" />
            </div>
          </div>
          <div className="flex h-2.5 shrink-0 items-center pr-[9px]">
            <div className="flex h-full flex-1 items-center justify-between bg-[#cdcdcc] pr-px pl-0.5">
              <div className="h-1.5 w-[409px] rounded-full bg-[#7e807e]" />
              <div className="h-2 w-0.5 bg-[#4f514f]" />
            </div>
          </div>
          <Tabs />
        </main>
        <SideBar />
      </div>
      <Status />
    </div>
  );
}
